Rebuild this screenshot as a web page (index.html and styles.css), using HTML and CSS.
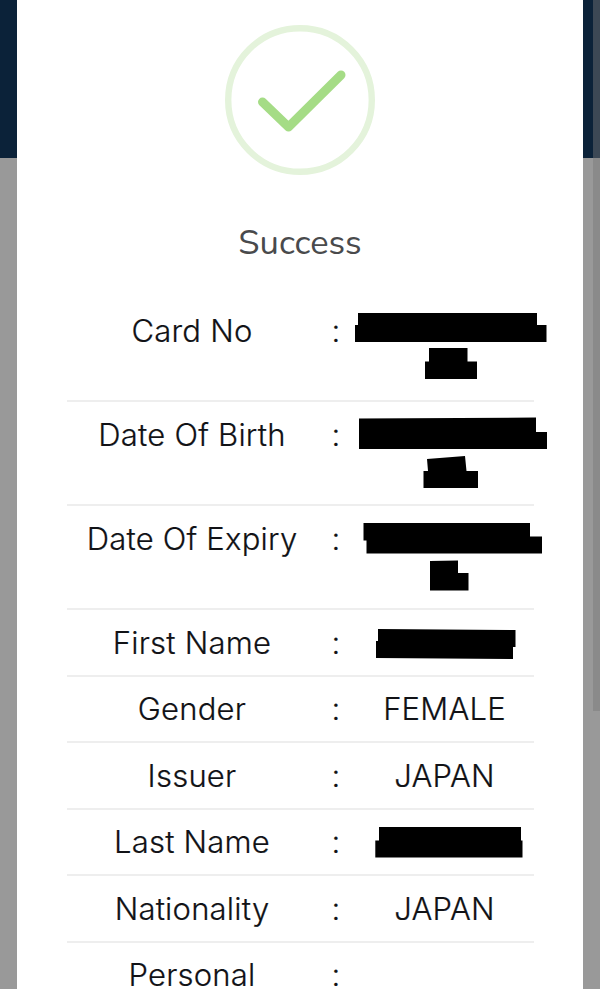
FILE: index.html
```html
<!DOCTYPE html>
<html lang="en">
<head>
<meta charset="utf-8">
<title>Success</title>
<link rel="stylesheet" href="styles.css">
</head>
<body>
<div class="page">
  <main class="modal">
    <svg class="status" viewBox="0 0 150 150" aria-hidden="true">
      <circle cx="75" cy="75" r="71.8" fill="none" stroke="#e4f3db" stroke-width="6.4"/>
      <path d="M37.500 77 63.500 102 116 50" fill="none" stroke="#a5dc86" stroke-width="9" stroke-linecap="round" stroke-linejoin="round"/>
    </svg>
    <h1 class="title"><span>Success</span></h1>
    <div class="details">
      <div class="row tall"><span>Card No</span><span>:</span>
        <svg class="redacted" viewBox="355 298 179 104"><path d="M358 313H537V325H546.5V342H355V325H358ZM429 348H467.5V361.500H477V379H425V361.500H429Z"/></svg></div>
      <div class="row tall"><span>Date Of Birth</span><span>:</span>
        <svg class="redacted" viewBox="355 402 179 104"><path d="M359 418.500 536 417.500V432H547V449H359ZM427 459 465 456 466.500 471H478V488H423.500V471H428Z"/></svg></div>
      <div class="row tall"><span>Date Of Expiry</span><span>:</span>
        <svg class="redacted" viewBox="355 506 179 104"><path d="M363.500 523H530V536.500H542V553.500H366.500V540.500H363.500ZM430 561 458 560.500V573H468.500V590.500H430Z"/></svg></div>
      <div class="row"><span>First Name</span><span>:</span>
        <svg class="redacted" viewBox="355 610 179 66.500"><path d="M378 629 515.500 630V647H513V659L376 658V641H378Z"/></svg></div>
      <div class="row"><span>Gender</span><span>:</span><span>FEMALE</span></div>
      <div class="row"><span>Issuer</span><span>:</span><span>JAPAN</span></div>
      <div class="row"><span>Last Name</span><span>:</span>
        <svg class="redacted" viewBox="355 810 179 66.500"><path d="M379 827H521V840.500H522.500V857.500H375.300V840.500H379Z"/></svg></div>
      <div class="row"><span>Nationality</span><span>:</span><span>JAPAN</span></div>
      <div class="row"><span>Personal</span><span>:</span><span></span></div>
    </div>
  </main>
  <div class="scrollbar"></div>
</div>
</body>
</html>
```

FILE: styles.css
```css
* { box-sizing: border-box; }
body { margin: 0; overflow: hidden; }
.page {
  position: relative;
  height: 989px;
  padding: 0 17px;
  overflow: hidden;
  background: linear-gradient(#0b2239 158px, #999 158px);
}
.modal {
  height: 989px;
  overflow: hidden;
  padding: 24.500px 50px 0;
  background: #fff;
}
.status {
  display: block;
  width: 150px;
  height: 150px;
  margin: 0 auto;
}
.title {
  margin: 43px 0 0;
  height: 50px;
  font: 400 34.500px/50px "Nunito", "Open Sans", sans-serif;
  text-align: center;
  color: #494a4c;
}
.details {
  margin-top: 30.500px;
  font: 300 31px/37px Inter, sans-serif;
  letter-spacing: 0.220px;
  color: #111216;
  -webkit-text-stroke: 0.200px #111216;
}
.row {
  display: grid;
  grid-template-columns: 250px 38px 179px;
  width: 467px;
  height: 66.600px;
  border-bottom: 2px solid #eee;
  text-align: center;
}
.row > span { padding-top: 13.500px; }
.tall { height: 104px; }
.redacted {
  display: block;
  width: 179px;
  height: 66.500px;
  overflow: visible;
  fill: #000;
  stroke: none;
}
.tall .redacted { height: 104px; }
.scrollbar {
  position: absolute;
  top: 0;
  right: 0;
  width: 7px;
  height: 711px;
  background: rgba(119, 119, 119, .45);
}
```
